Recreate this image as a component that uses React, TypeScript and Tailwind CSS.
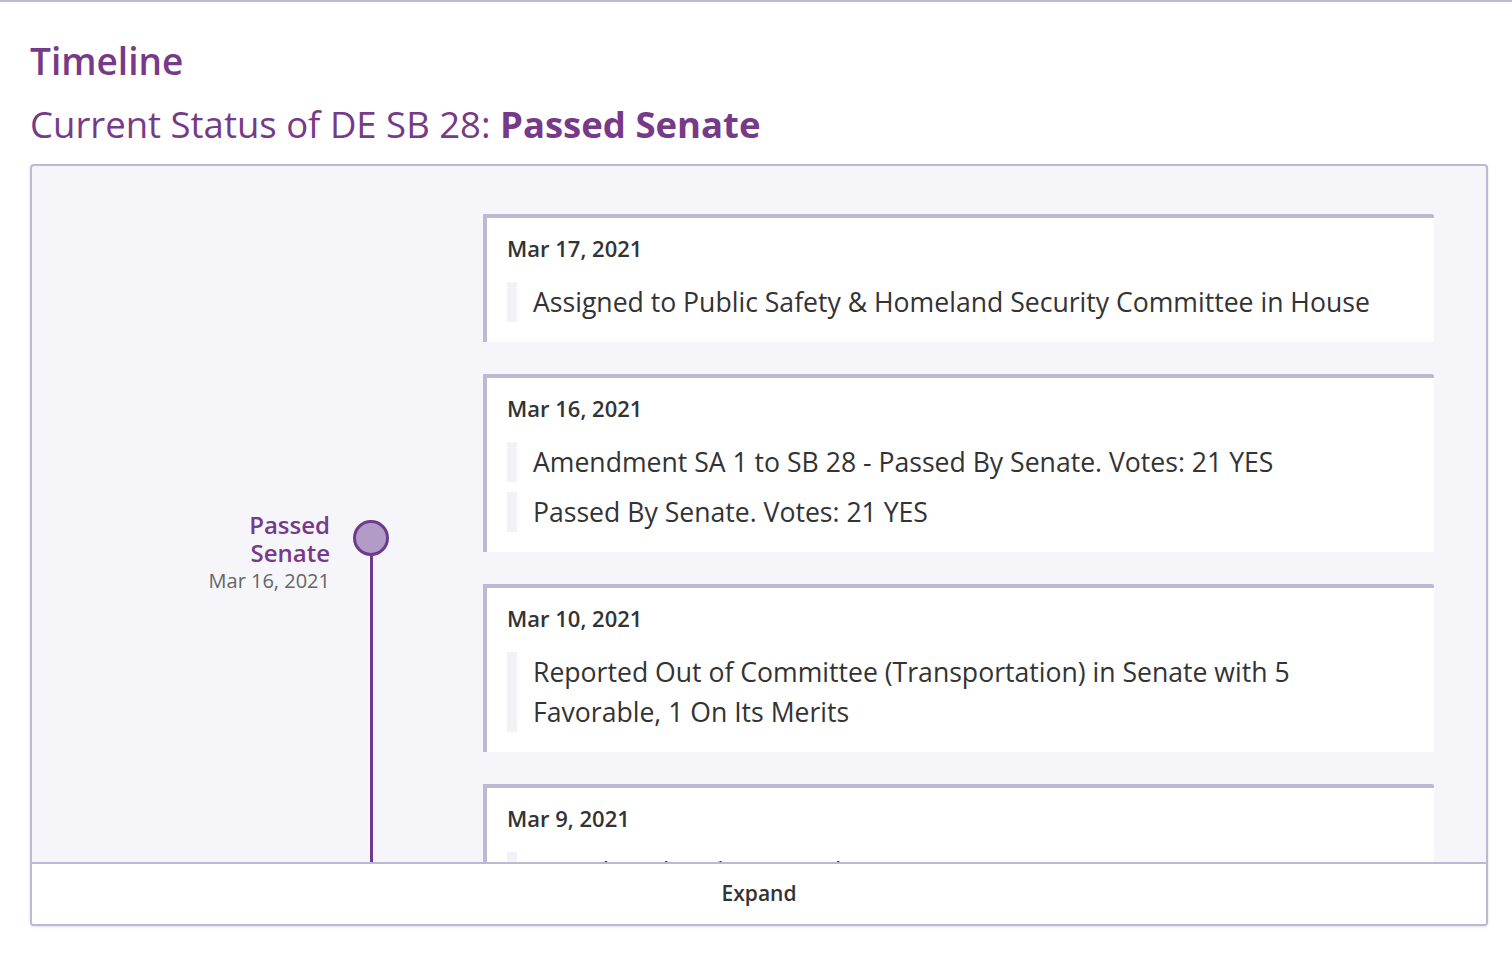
import React from "react";

interface TimelineEntry {
  date: string;
  actions: string[];
}

const entries: TimelineEntry[] = [
  {
    date: "Mar 17, 2021",
    actions: ["Assigned to Public Safety & Homeland Security Committee in House"],
  },
  {
    date: "Mar 16, 2021",
    actions: [
      "Amendment SA 1 to SB 28 - Passed By Senate. Votes: 21 YES",
      "Passed By Senate. Votes: 21 YES",
    ],
  },
  {
    date: "Mar 10, 2021",
    actions: [
      "Reported Out of Committee (Transportation) in Senate with 5 Favorable, 1 On Its Merits",
    ],
  },
  {
    date: "Mar 9, 2021",
    actions: ["Introduced and Assigned to Transportation Committee in Senate"],
  },
];

function EntryCard({ entry }: { entry: TimelineEntry }) {
  return (
    <div className="bg-white border-t-4 border-l-4 border-[#bdb8d4] rounded-r-[2px] pl-5 pr-6 pt-4 pb-5">
      <div className="text-[22px] leading-[28px] font-semibold text-[#333]">{entry.date}</div>
      <div className="mt-5 flex flex-col gap-[10px]">
        {entry.actions.map((a) => (
          <div key={a} className="flex">
            <span className="w-[10px] shrink-0 bg-[#f2f2f8]" />
            <span className="ml-4 text-[26.6px] leading-[40px] text-[#333] max-w-[840px]">{a}</span>
          </div>
        ))}
      </div>
    </div>
  );
}

export default function App() {
  return (
    <div className="min-h-[972px] bg-white border-t-2 border-[#bdb8d4]" style={{ fontFamily: '"Open Sans", sans-serif' }}>
      <div className="pl-[30px] pt-[37px]">
        <h2 className="text-[37px] leading-[44px] font-semibold text-[#773a88]">Timeline</h2>
        <h3 className="mt-[19px] text-[36.5px] leading-[44px] text-[#773a88]">
          Current Status of DE SB 28: <span className="font-bold">Passed Senate</span>
        </h3>
      </div>

      {/* Timeline box */}
      <div className="ml-[30px] mt-[18px] w-[1458px] border-2 border-[#bdb8d4] rounded-[4px] bg-[#f5f5fa] overflow-hidden shadow-sm">
        <div className="h-[696px] flex overflow-hidden">
          {/* status marker column */}
          <div className="w-[451px] shrink-0 flex justify-end pt-[345px] pr-[94px]">
            <div className="text-right">
              <div className="text-[24px] leading-[28px] font-semibold text-[#773a88]">
                <div>Passed</div>
                <div>Senate</div>
              </div>
              <div className="text-[20px] leading-[28px] text-[#666]">Mar 16, 2021</div>
            </div>
            <div className="ml-[23px] mt-[9px] flex flex-col items-center">
              <div className="w-[36px] h-[36px] rounded-full border-[3.5px] border-[#6f3a8c] bg-[#b39bc8]" />
              <div className="flex-1 w-[3px] bg-[#6f3a8c]" />
            </div>
          </div>

          {/* entries */}
          <div className="flex-1 mr-[52px] pt-[48px] flex flex-col gap-8">
            {entries.map((e) => (
              <EntryCard key={e.date} entry={e} />
            ))}
          </div>
        </div>

        <button className="w-full h-[62px] bg-white border-t-2 border-[#bdb8d4] text-[21px] font-semibold text-[#333]">
          Expand
        </button>
      </div>
    </div>
  );
}
